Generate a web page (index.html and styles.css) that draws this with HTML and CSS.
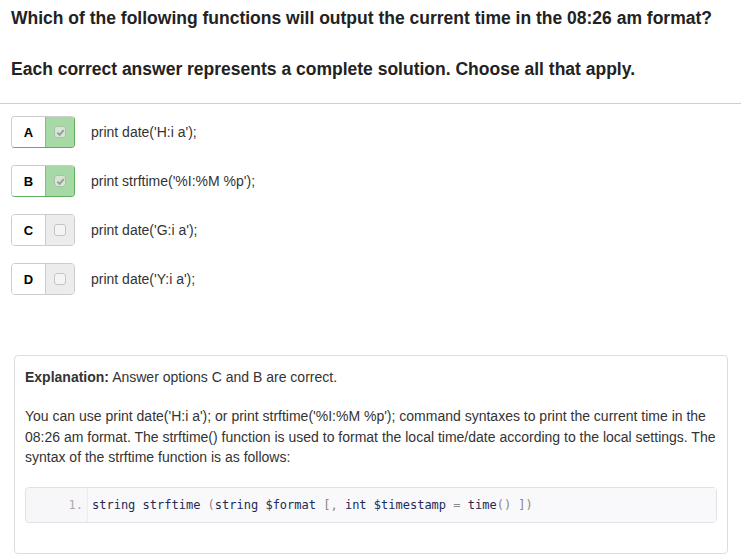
FILE: index.html
```html
<!DOCTYPE html>
<html>
<head>
<meta charset="utf-8">
<link rel="stylesheet" href="styles.css">
</head>
<body>
<div class="page">
  <div class="question">
    <p class="q-line">Which of the following functions will output the current time in the 08:26 am format?</p>
    <p class="q-line q-second">Each correct answer represents a complete solution. Choose all that apply.</p>
  </div>
  <hr class="rule">
  <div class="options">
    <div class="option">
      <div class="choice checked"><span class="letter">A</span><span class="box"><span class="cb"><svg viewBox="0 0 10 10" width="9" height="9"><path d="M1.5 5.2 L4 7.6 L8.6 2.4" fill="none" stroke="#8f9f8f" stroke-width="2"/></svg></span></span></div>
      <span class="opt-text">print date('H:i a');</span>
    </div>
    <div class="option">
      <div class="choice checked"><span class="letter">B</span><span class="box"><span class="cb"><svg viewBox="0 0 10 10" width="9" height="9"><path d="M1.5 5.2 L4 7.6 L8.6 2.4" fill="none" stroke="#8f9f8f" stroke-width="2"/></svg></span></span></div>
      <span class="opt-text">print strftime('%I:%M %p');</span>
    </div>
    <div class="option">
      <div class="choice"><span class="letter">C</span><span class="box"><span class="cb"></span></span></div>
      <span class="opt-text">print date('G:i a');</span>
    </div>
    <div class="option">
      <div class="choice"><span class="letter">D</span><span class="box"><span class="cb"></span></span></div>
      <span class="opt-text">print date('Y:i a');</span>
    </div>
  </div>
  <div class="explanation">
    <p class="exp-head"><b>Explanation:</b> Answer options C and B are correct.</p>
    <p class="exp-body">You can use print date('H:i a'); or print strftime('%I:%M %p'); command syntaxes to print the current time in the 08:26 am format. The strftime() function is used to format the local time/date according to the local settings. The syntax of the strftime function is as follows:</p>
    <div class="code">
      <span class="gutter">1.</span>
      <span class="src"><span class="k">string strftime</span> <span class="p">(</span><span class="k">string $format</span> <span class="p">[,</span> <span class="k">int $timestamp</span> <span class="p">=</span> <span class="k">time</span><span class="p">() ])</span></span>
    </div>
  </div>
</div>
</body>
</html>
```

FILE: styles.css
```css
html, body {
  margin: 0;
  padding: 0;
  background: #fff;
}
body {
  font-family: "Liberation Sans", Arial, sans-serif;
  color: #333;
}
.page {
  width: 751px;
}
.question {
  padding: 8px 11px 0;
}
.q-line {
  margin: 0;
  font-size: 17.5px;
  font-weight: bold;
  line-height: 20px;
  color: #222;
}
.q-second {
  margin-top: 31px;
}
.rule {
  margin: 24px 10px 0 0;
  border: 0;
  border-top: 1px solid #cfcfcf;
  height: 0;
}
.options {
  padding: 12px 0 0 11px;
  display: flex;
  flex-direction: column;
  gap: 17px;
}
.option {
  display: flex;
  align-items: center;
  height: 32px;
}
.choice {
  display: flex;
  width: 64px;
  height: 32px;
  box-sizing: border-box;
  border: 1px solid #ccc;
  border-radius: 4px;
  overflow: hidden;
}
.letter {
  width: 33px;
  display: flex;
  align-items: center;
  justify-content: center;
  font-weight: bold;
  font-size: 13px;
  color: #000;
  background: #fff;
}
.box {
  flex: 1;
  display: flex;
  align-items: center;
  justify-content: center;
  background: #ececec;
  border-left: 1px solid #ccc;
}
.checked {
  border-color: #ccc #5cae5c #5cae5c #ccc;
}
.checked .box {
  background: #a6d9a6;
  border-left-color: #7cc17c;
}
.cb {
  width: 12px;
  height: 12px;
  box-sizing: border-box;
  border: 1px solid #c4c4c4;
  border-radius: 3px;
  background: #f4f4f4;
  display: flex;
  align-items: center;
  justify-content: center;
}
.checked .cb {
  background: #d8e4d8;
  border-color: #a8c2a8;
}
.opt-text {
  margin-left: 16px;
  font-size: 14px;
  color: #333;
}
.explanation {
  margin: 60px 0 0 14px;
  width: 714px;
  box-sizing: border-box;
  border: 1px solid #ddd;
  border-radius: 4px;
  padding: 11px 10px 30px 10px;
  font-size: 14px;
  color: #333;
}
.exp-head {
  margin: 0;
  line-height: 20px;
}
.exp-body {
  margin: 19px 0 0;
  line-height: 20.5px;
}
.code {
  margin-top: 19px;
  display: flex;
  align-items: stretch;
  height: 36px;
  box-sizing: border-box;
  border: 1px solid #e1e1e8;
  border-radius: 4px;
  background: #f7f7f9;
  font-family: "DejaVu Sans Mono", "Liberation Mono", monospace;
  font-size: 12px;
  line-height: 34px;
}
.gutter {
  width: 62px;
  box-sizing: border-box;
  padding-right: 4px;
  text-align: right;
  color: #aaa;
  border-right: 1px solid #ececf0;
}
.src {
  padding-left: 4px;
  white-space: pre;
  background: #f9f9fb;
  flex: 1;
}
.k { color: #1f2a55; }
.p { color: #888; }
```
